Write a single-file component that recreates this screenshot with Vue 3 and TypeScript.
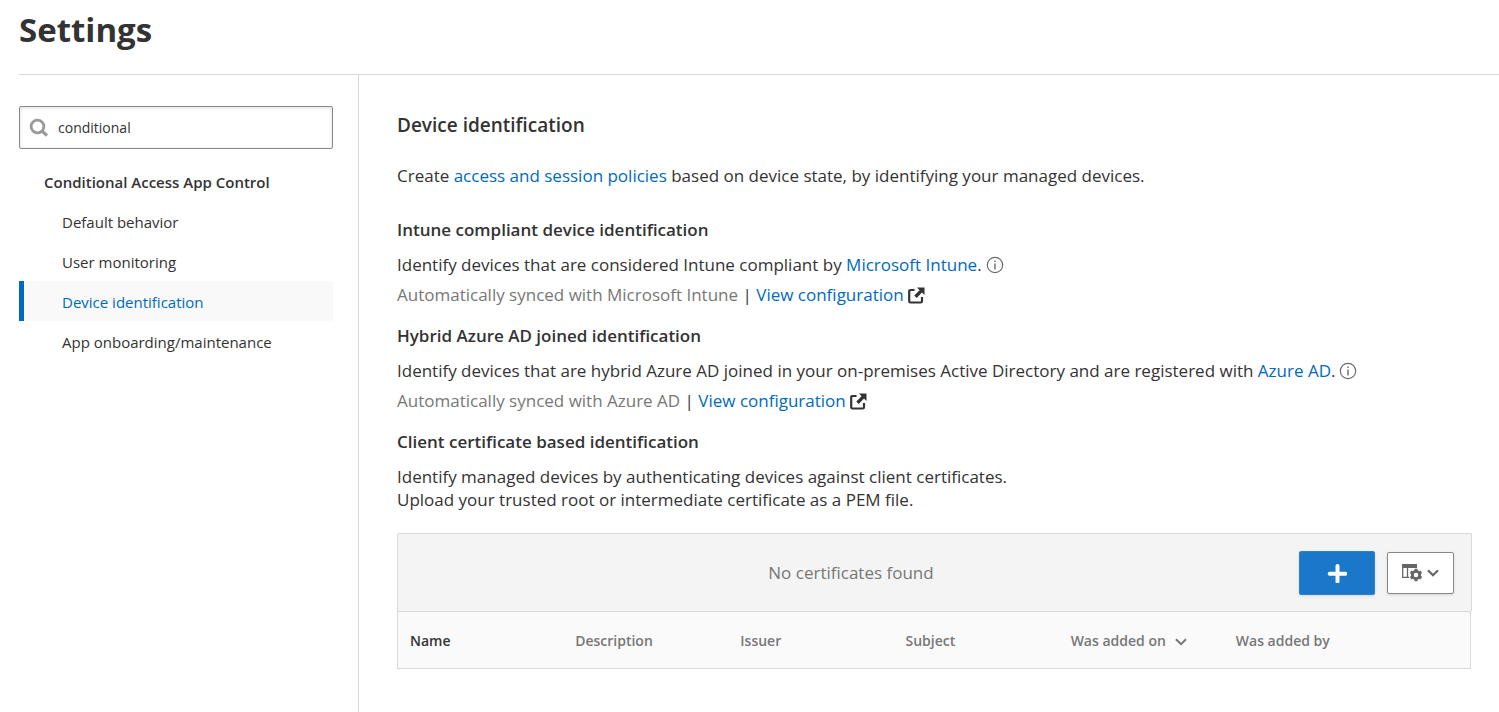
<script setup lang="ts">
import { ref } from 'vue'

const query = ref('conditional')
const active = ref('Device identification')
const items: string[] = ['Default behavior', 'User monitoring', 'Device identification', 'App onboarding/maintenance']
const columns: string[] = ['Name', 'Description', 'Issuer', 'Subject', 'Was added on', 'Was added by']
</script>

<template>
  <div class="page">
    <header class="header">
      <h1>Settings</h1>
    </header>
    <div class="body">
      <aside class="sidebar">
        <label class="search">
          <svg width="20" height="20" viewBox="0 0 20 20" fill="none" stroke="#999" aria-hidden="true">
            <circle cx="8.500" cy="8.500" r="6.400" stroke-width="2.800" />
            <path d="M13 13l5 4.600" stroke-width="3.200" />
          </svg>
          <input v-model="query" type="text" aria-label="Search settings" />
        </label>
        <nav class="nav" aria-label="Settings">
          <h2>Conditional Access App Control</h2>
          <a
            v-for="item in items"
            :key="item"
            href="#"
            :class="{ active: item === active }"
            @click.prevent="active = item"
          ><span>{{ item }}</span></a>
        </nav>
      </aside>
      <main class="main">
        <h2 class="title">Device identification</h2>
        <p class="intro">
          Create <a href="#">access and session policies</a> based on device state, by identifying your managed devices.
        </p>

        <section class="block">
          <h3>Intune compliant device identification</h3>
          <p class="line">
            <span>Identify devices that are considered Intune compliant by <a href="#">Microsoft Intune</a>.</span>
            <svg class="info" width="18" height="18" viewBox="0 0 18 18" aria-hidden="true">
              <circle cx="9" cy="9" r="7.700" fill="none" stroke="#6b6b6b" stroke-width="1.200" />
              <path d="M9 4.500v1.600M9 7.500v6" stroke="#6b6b6b" stroke-width="1.400" />
            </svg>
          </p>
          <p class="line sync">
            <span>Automatically synced with Microsoft Intune <i>|</i> <a href="#">View configuration</a></span>
            <svg width="17" height="17" viewBox="0 0 17 17" aria-hidden="true">
              <path d="M6.500 3H2.500Q1.200 3 1.200 4.300V14.200Q1.200 15.500 2.500 15.500H12.700Q14 15.500 14 14.200V10" fill="none" stroke="#333" stroke-width="2.200" />
              <path d="M9 .5H16.500V8L14 5.600 8.700 10.900 6.300 8.500 11.600 3.200Z" fill="#333" />
            </svg>
          </p>
        </section>

        <section class="block">
          <h3>Hybrid Azure AD joined identification</h3>
          <p class="line">
            <span>Identify devices that are hybrid Azure AD joined in your on-premises Active Directory and are registered with <a href="#">Azure AD</a>.</span>
            <svg class="info" width="18" height="18" viewBox="0 0 18 18" aria-hidden="true">
              <circle cx="9" cy="9" r="7.700" fill="none" stroke="#6b6b6b" stroke-width="1.200" />
              <path d="M9 4.500v1.600M9 7.500v6" stroke="#6b6b6b" stroke-width="1.400" />
            </svg>
          </p>
          <p class="line sync">
            <span>Automatically synced with Azure AD <i>|</i> <a href="#">View configuration</a></span>
            <svg width="17" height="17" viewBox="0 0 17 17" aria-hidden="true">
              <path d="M6.500 3H2.500Q1.200 3 1.200 4.300V14.200Q1.200 15.500 2.500 15.500H12.700Q14 15.500 14 14.200V10" fill="none" stroke="#333" stroke-width="2.200" />
              <path d="M9 .5H16.500V8L14 5.600 8.700 10.900 6.300 8.500 11.600 3.200Z" fill="#333" />
            </svg>
          </p>
        </section>

        <section class="block">
          <h3>Client certificate based identification</h3>
          <p class="note">
            Identify managed devices by authenticating devices against client certificates.<br />
            Upload your trusted root or intermediate certificate as a PEM file.
          </p>
        </section>

        <div class="toolbar">
          <span class="empty">No certificates found</span>
          <button class="add" type="button" aria-label="Add certificate">
            <svg width="20" height="20" viewBox="0 0 20 20" aria-hidden="true">
              <path d="M10.500 3v15.600M2.700 10.800h15.600" stroke="#fff" stroke-width="4" stroke-linecap="round" />
            </svg>
          </button>
          <button class="cols" type="button" aria-label="Table settings">
            <svg width="21" height="18" viewBox="0 0 21 18" aria-hidden="true">
              <path d="M0 0H15V4H0Z" fill="#666" />
              <path d="M.7 3V13.300H5.500V3M5.500 13.300H7" fill="none" stroke="#666" stroke-width="1.300" />
              <circle cx="14" cy="11" r="3.700" fill="none" stroke="#666" stroke-width="2.800" />
              <path d="M14 4.800v2.200M14 15v2.200M8.600 7.900l2 1.100M17.400 13l2 1.100M8.600 14.100l2-1.100M17.400 9l2-1.100" stroke="#666" stroke-width="3" />
            </svg>
            <svg width="12" height="8" viewBox="0 0 12 8" aria-hidden="true">
              <path d="M1 1.200l5 5 5-5" fill="none" stroke="#666" stroke-width="2.200" />
            </svg>
          </button>
        </div>
        <table class="grid">
          <thead>
            <tr>
              <th v-for="(c, i) in columns" :key="c" scope="col" :class="{ first: i === 0 }">
                {{ c }}
                <svg v-if="i === 4" width="12" height="8" viewBox="0 0 12 8" aria-hidden="true">
                  <path d="M1 1.200l5 5 5-5" fill="none" stroke="#777" stroke-width="2" />
                </svg>
              </th>
            </tr>
          </thead>
        </table>
      </main>
    </div>
  </div>
</template>

<style>
body {
  background: #fff;
}
</style>

<style scoped>
* {
  box-sizing: border-box;
}
.page {
  min-height: 100vh;
  display: flex;
  flex-direction: column;
  padding-left: 19px;
  color: #333;
  font: 17px/24px "Segoe UI", "Open Sans", "Noto Sans", sans-serif;
}
h1,
h2,
h3,
p {
  margin: 0;
}
a {
  color: #006abe;
  text-decoration: none;
}
.header {
  padding: 6px 0 20px;
  border-bottom: 1px solid #d9d9d9;
}
h1 {
  font-size: 33px;
  line-height: 48px;
  font-weight: 700;
}
.body {
  flex: 1;
  display: flex;
}
.sidebar {
  flex: none;
  width: 340px;
  padding: 31px 25px 0 0;
  border-right: 1px solid #d9d9d9;
}
.search {
  display: flex;
  align-items: center;
  gap: 9px;
  height: 43px;
  padding: 0 9px;
  border: 1px solid #888;
  border-radius: 2px;
  box-shadow: inset 0 1px 4px rgba(0, 0, 0, 0.12);
}
.search input {
  flex: 1;
  min-width: 0;
  padding: 0;
  border: 0;
  outline: 0;
  background: none;
  color: #333;
  font: inherit;
  font-size: 14px;
}
.nav {
  padding-top: 12px;
}
.nav h2 {
  padding-top: 2px;
  padding-left: 25px;
  font-size: 15px;
  line-height: 38px;
  font-weight: 600;
}
.nav a {
  display: block;
  height: 40px;
  padding-top: 2px;
  padding-left: 38px;
  border-left: 5px solid transparent;
  color: #333;
  font-size: 15px;
  line-height: 38px;
}
.nav a.active {
  border-color: #006abe;
  background: #f9f9f9;
  color: #006abe;
}
.main {
  flex: 1;
  min-width: 0;
  padding: 38px 27px 0 38px;
}
.title {
  font-size: 19px;
  font-weight: 600;
}
.intro {
  margin-top: 27px;
  margin-bottom: 30px;
}
.block {
  margin-bottom: 14px;
}
h3 {
  margin-bottom: 8px;
  font-size: 17px;
  font-weight: 600;
}
.line {
  display: flex;
  align-items: center;
  gap: 4px;
  line-height: 30px;
}
.sync {
  color: #777;
}
.sync i {
  color: #333;
  font-style: normal;
}
.note {
  padding-top: 3px;
  line-height: 23px;
}
.toolbar {
  display: flex;
  align-items: center;
  gap: 12px;
  height: 78px;
  margin-top: 22px;
  padding: 0 17px;
  background: #f4f4f4;
  border: 1px solid #d9d9d9;
  border-bottom: 0;
  border-radius: 2px 2px 0 0;
}
.empty {
  flex: 1;
  text-align: center;
  color: #777;
}
button {
  display: flex;
  align-items: center;
  justify-content: center;
  padding: 0;
  border-radius: 2px;
  box-shadow: 0 1px 3px rgba(0, 0, 0, 0.12);
}
.add {
  width: 76px;
  height: 44px;
  border: 1px solid #2b83d0;
  background: #1b77c9;
}
.cols {
  gap: 4px;
  width: 67px;
  height: 42px;
  border: 1px solid #888;
  background: #fff;
}
.grid {
  width: calc(100% - 1px);
  table-layout: fixed;
  border-spacing: 0;
  border: 1px solid #d9d9d9;
  background: #fafafa;
  padding-right: 81px;
}
th {
  height: 56px;
  padding: 1px 0 0 12px;
  text-align: left;
  color: #777;
  font-size: 14px;
  font-weight: 600;
  white-space: nowrap;
}
th.first {
  color: #333;
}
th svg {
  margin-left: 6px;
}
</style>
